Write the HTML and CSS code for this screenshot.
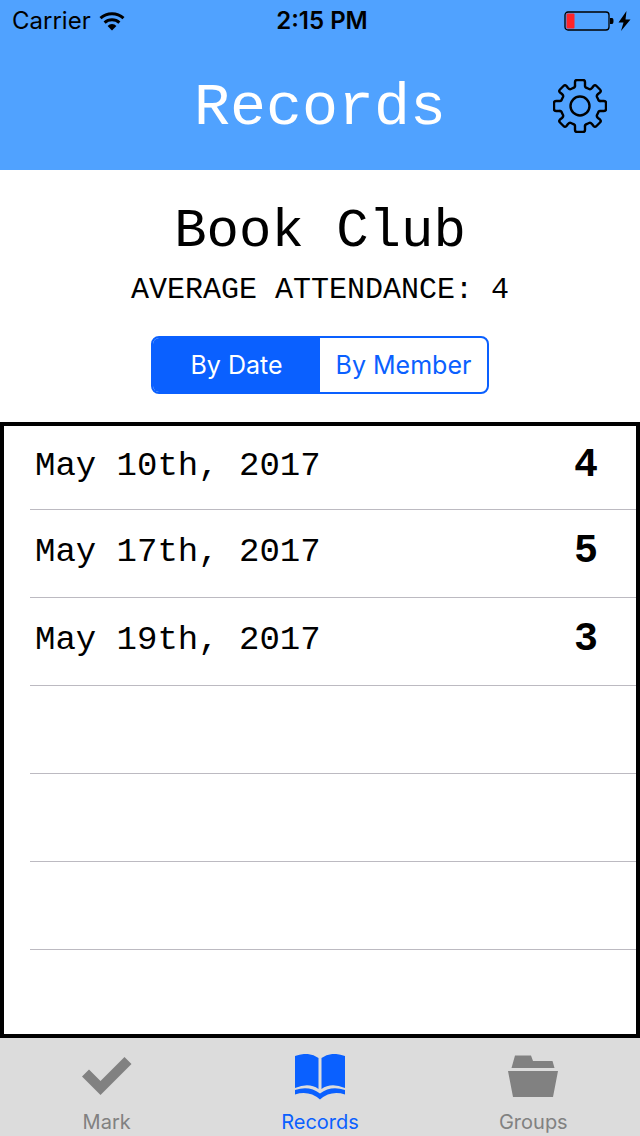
FILE: index.html
```html
<!DOCTYPE html>
<html lang="en">
<head>
<meta charset="utf-8">
<meta name="viewport" content="width=device-width">
<title>Records</title>
<link rel="stylesheet" href="styles.css">
</head>
<body>
<div class="app">
  <header class="header">
    <div class="status">
      <div class="carrier"><span>Carrier</span>
        <svg class="wifi" width="26" height="20" viewBox="0 0 26 20" fill="none" stroke="#000" stroke-width="3"><path d="M1.5 7.2a17 17 0 0 1 23 0M5.6 11.600a11 11 0 0 1 14.800 0"/><path d="M8.600 14.900a6 6 0 0 1 8.800 0L13 19.500z" fill="#000" stroke="none"/></svg>
      </div>
      <div class="clock">2:15 PM</div>
      <div class="power">
        <svg width="68" height="22" viewBox="0 0 68 22"><rect x="1" y="2" width="44" height="18" rx="3" fill="none" stroke="#000" stroke-width="1.3"/><rect x="2.500" y="3.500" width="8" height="15" rx="1" fill="#ff2328"/><path d="M46 8h2q1.500 0 1.500 3T48 14h-2z"/><path d="M62.500 1 54.500 12.500h5L57 21 66.500 9.500h-5z"/></svg>
      </div>
    </div>
    <div class="titlebar">
      <h1 class="title">Records</h1>
      <button class="settings" aria-label="Settings">
        <svg width="54" height="54" viewBox="-27 -27 54 54" fill="none" stroke="#000" stroke-width="2.4" stroke-linejoin="round" stroke-linecap="round"><defs><path id="cog" d="M-5-20V-24Q-5-26-3-26H3Q5-26 5-24V-20Q5-18.500 7-18L9-17Q10.500-16.300 12-18L13.500-20Q15-21.500 16.500-20L20-16.500Q21.500-15 20-13.500L18-12Q16.300-10.500 17-9L18-7Q18.500-5 20-5"/></defs><use href="#cog"/><use href="#cog" transform="rotate(90)"/><use href="#cog" transform="rotate(180)"/><use href="#cog" transform="rotate(270)"/><circle r="9.500"/></svg>
      </button>
    </div>
  </header>
  <main class="main">
    <section class="summary">
      <h2 class="group">Book Club</h2>
      <p class="average">AVERAGE ATTENDANCE: 4</p>
      <div class="segments">
        <button class="segment selected" aria-pressed="true">By Date</button>
        <button class="segment" aria-pressed="false">By Member</button>
      </div>
    </section>
    <ul class="records">
      <li class="record"><span>May 10th, 2017</span><strong class="count">4</strong></li>
      <li class="record"><span>May 17th, 2017</span><strong class="count">5</strong></li>
      <li class="record"><span>May 19th, 2017</span><strong class="count">3</strong></li>
      <li class="record"></li>
      <li class="record"></li>
      <li class="record"></li>
    </ul>
  </main>
  <nav class="tabs">
    <a class="tab" href="#mark">
      <svg width="50" height="48" viewBox="0 0 50 48" fill="currentColor"><path d="M0 22.500 7 15.500 18.500 27 42.500 3 49.500 10 18.500 41z"/></svg>
      <span>Mark</span>
    </a>
    <a class="tab active" href="#records" aria-current="page">
      <svg width="50" height="48" viewBox="0 0 50 48" fill="currentColor"><path d="M0 2Q14-3 23.500 4V35Q14 28 0 34zM50 2Q36-3 26.500 4V35Q36 28 50 34z"/><path d="M0 36Q14 31 25 39.500 36 31 50 36V40.500Q36 36 25 45.500 14 36 0 40.500z"/></svg>
      <span>Records</span>
    </a>
    <a class="tab" href="#groups">
      <svg width="50" height="48" viewBox="0 0 50 48" fill="currentColor"><path d="M7 1.500H23L25 7H44.500L46.500 14H3.500zM0 17H50L45 43H5z"/></svg>
      <span>Groups</span>
    </a>
  </nav>
</div>
</body>
</html>
```
FILE: styles.css
```css
* { box-sizing: border-box; }
body { margin: 0; background: #fff; color: #000; font-family: Inter, "Liberation Sans", sans-serif; }
h1, h2, p, ul { margin: 0; padding: 0; font-weight: 400; }
button { border: 0; padding: 0; background: none; font: inherit; color: inherit; }
svg { display: block; }

.app { min-height: 100vh; display: flex; flex-direction: column; }
.header { background: #50a2ff; }
.status { display: grid; grid-template-columns: 1fr auto 1fr; align-items: center; height: 41px; padding: 0 8px 0 12px; font-size: 24px; }
.carrier { display: flex; align-items: center; gap: 8px; }
.clock { font-weight: 600; }
.power { justify-self: end; }

.titlebar { display: grid; grid-template-columns: 1fr auto 1fr; align-items: center; height: 129px; padding: 0 33px; }
.title { grid-column: 2; padding-top: 4px; color: #fff; font-family: "Liberation Mono", monospace; font-size: 60px; line-height: 68px; }
.settings { justify-self: end; }

.main { flex: 1; display: flex; flex-direction: column; }
.summary { display: flex; flex-direction: column; align-items: center; padding: 32px 16px 28px; }
.group { font-family: "Liberation Mono", monospace; font-size: 54px; line-height: 60px; }
.average { margin-top: 10px; font-family: "Liberation Mono", monospace; font-size: 30px; line-height: 36px; text-align: center; }
.segments { display: grid; grid-template-columns: 1fr 1fr; width: 338px; max-width: 100%; margin-top: 28px; border: 2px solid #0a60ff; border-radius: 8px; overflow: hidden; }
.segment { height: 54px; color: #0a60ff; font-size: 25px; }
.selected { background: #0a60ff; color: #fff; }

.records { flex: 1; list-style: none; border: 4px solid #000; padding-left: 26px; }
.record { display: flex; align-items: center; justify-content: space-between; height: 88px; padding: 0 38px 4px 5px; border-bottom: 1px solid #bcbac1; font-family: "Liberation Mono", monospace; font-size: 34px; }
.record:first-child { height: 84px; }
.count { font-size: 40px; }

.tabs { display: grid; grid-template-columns: repeat(3, 1fr); height: 98px; background: #dcdcdc; }
.tab { display: flex; flex-direction: column; align-items: center; gap: 8px; padding-top: 16px; color: #818181; font-size: 20px; line-height: 24px; text-decoration: none; }
.active { color: #0a60ff; }
```
